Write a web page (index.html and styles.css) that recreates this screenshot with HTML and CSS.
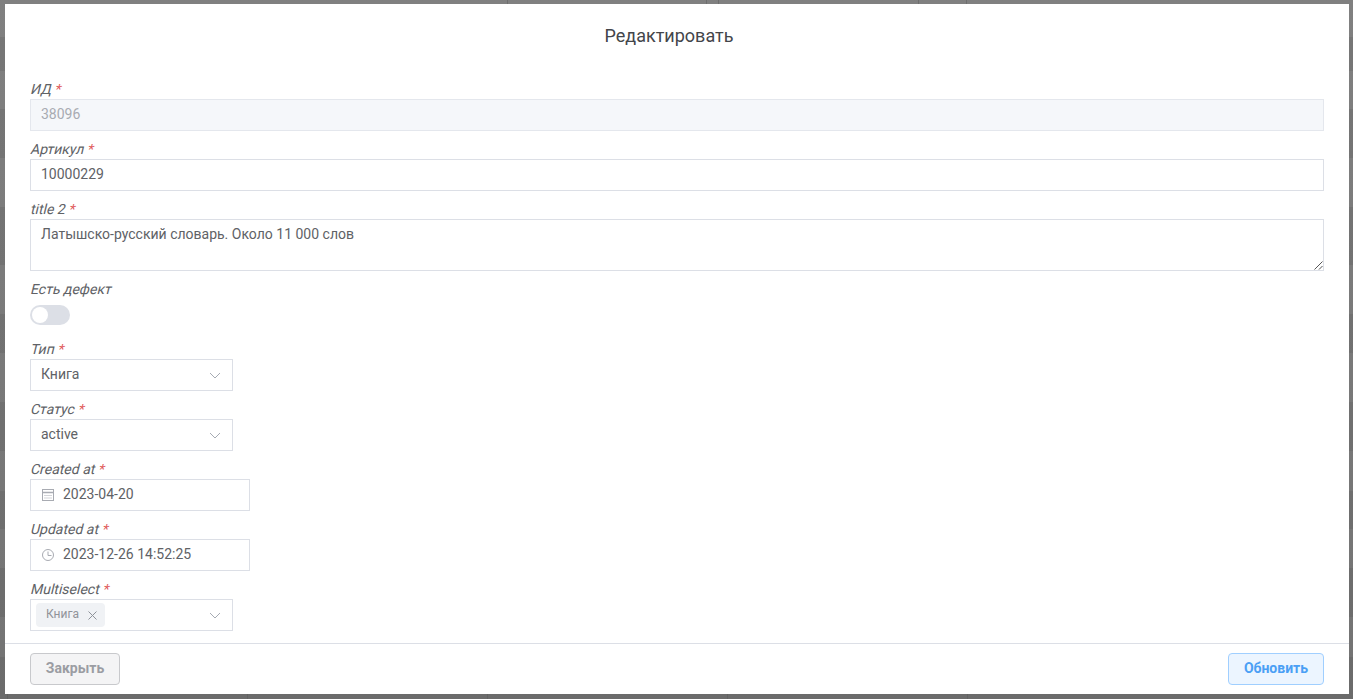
FILE: index.html
```html
<!DOCTYPE html>
<html lang="ru">
<head>
<meta charset="utf-8">
<title>Редактировать</title>
<link rel="stylesheet" href="styles.css">
</head>
<body>
<div class="modal">
  <header class="modal-head">Редактировать</header>
  <form class="modal-body">
    <div class="field">
      <label class="label">ИД <span class="req">*</span></label>
      <div class="control wide disabled"><span class="val">38096</span></div>
    </div>
    <div class="field">
      <label class="label">Артикул <span class="req">*</span></label>
      <div class="control wide"><span class="val">10000229</span></div>
    </div>
    <div class="field">
      <label class="label">title 2 <span class="req">*</span></label>
      <div class="control wide area">Латышско-русский словарь. Около 11 000 слов
        <svg class="grip" width="9" height="9" viewBox="0 0 9 9"><path d="M0.5 8.5L8.5 0.5M5 8.5L8.5 5" stroke="#555" stroke-width="1" fill="none"/></svg>
      </div>
    </div>
    <div class="field">
      <label class="label">Есть дефект</label>
      <div class="switch-row"><span class="switch"><span class="knob"></span></span></div>
    </div>
    <div class="field">
      <label class="label">Тип <span class="req">*</span></label>
      <div class="control select"><span class="val">Книга</span>
        <svg class="chev" width="12" height="7" viewBox="0 0 12 7"><path d="M1 1l5 5 5-5" stroke="#a6abb3" fill="none"/></svg>
      </div>
    </div>
    <div class="field">
      <label class="label">Статус <span class="req">*</span></label>
      <div class="control select"><span class="val">active</span>
        <svg class="chev" width="12" height="7" viewBox="0 0 12 7"><path d="M1 1l5 5 5-5" stroke="#a6abb3" fill="none"/></svg>
      </div>
    </div>
    <div class="field">
      <label class="label">Created at <span class="req">*</span></label>
      <div class="control date">
        <svg width="14" height="14" viewBox="0 0 14 14" fill="none" stroke="#a8abb2"><rect x="1.5" y="1.5" width="11" height="11"/><path d="M1.5 4.5h11" stroke-width="1.5"/><path d="M3.5 7.5h7M3.5 10h7" stroke-dasharray="1 1"/></svg>
        <span class="val">2023-04-20</span>
      </div>
    </div>
    <div class="field">
      <label class="label">Updated at <span class="req">*</span></label>
      <div class="control date">
        <svg width="14" height="14" viewBox="0 0 14 14" fill="none" stroke="#a8abb2"><circle cx="7" cy="7" r="5.5"/><path d="M7 3.5V7.5H10.5"/></svg>
        <span class="val">2023-12-26 14:52:25</span>
      </div>
    </div>
    <div class="field">
      <label class="label">Multiselect <span class="req">*</span></label>
      <div class="control select multi">
        <span class="tag"><span class="val">Книга</span>
          <svg width="9" height="9" viewBox="0 0 9 9"><path d="M.5 .5l8 8M8.5 .5l-8 8" stroke="#8e9299" fill="none"/></svg>
        </span>
        <svg class="chev" width="12" height="7" viewBox="0 0 12 7"><path d="M1 1l5 5 5-5" stroke="#a6abb3" fill="none"/></svg>
      </div>
    </div>
  </form>
  <footer class="modal-foot">
    <button type="button" class="btn btn-close">Закрыть</button>
    <button type="button" class="btn btn-update">Обновить</button>
  </footer>
</div>
</body>
</html>
```
FILE: styles.css
```css
* { box-sizing: border-box; }
html, body { margin: 0; height: 100%; overflow: hidden; }
body {
  background-color: #7f7f7f;
  background-image:
    linear-gradient(to right, transparent 507px, #6e6e6e 507px, #6e6e6e 508px, transparent 508px, transparent 706px, #6e6e6e 706px, #6e6e6e 707px, transparent 707px, transparent 718px, #6e6e6e 718px, #6e6e6e 719px, transparent 719px, transparent 918px, #6e6e6e 918px, #6e6e6e 919px, transparent 919px, transparent 966px, #6e6e6e 966px, #6e6e6e 967px, transparent 967px),
    linear-gradient(to right, transparent 7px, #626262 7px, #626262 8px, transparent 8px, transparent 247px, #626262 247px, #626262 248px, transparent 248px, transparent 487px, #626262 487px, #626262 488px, transparent 488px, transparent 727px, #626262 727px, #626262 728px, transparent 728px, transparent 967px, #626262 967px, #626262 968px, transparent 968px),
    linear-gradient(to bottom, transparent 37px, rgba(0,0,0,.07) 37px, rgba(0,0,0,.07) 71px, transparent 71px, transparent 109px, rgba(0,0,0,.07) 109px, rgba(0,0,0,.07) 158px, transparent 158px, transparent 207px, rgba(0,0,0,.07) 207px, rgba(0,0,0,.07) 265px, transparent 265px, transparent 314px, rgba(0,0,0,.07) 314px, rgba(0,0,0,.07) 353px, transparent 353px, transparent 402px, rgba(0,0,0,.07) 402px, rgba(0,0,0,.07) 451px, transparent 451px, transparent 491px, rgba(0,0,0,.07) 491px, rgba(0,0,0,.07) 529px, transparent 529px, transparent 568px, rgba(0,0,0,.07) 568px, rgba(0,0,0,.07) 617px, transparent 617px, transparent 657px, rgba(0,0,0,.07) 657px),
    linear-gradient(to bottom, #808080, #737373);
  background-repeat: no-repeat;
  background-size: 100% 4px, 100% 5px, 100% 100%, 100% 100%;
  background-position: 0 0, 0 100%, 0 0, 0 0;
  padding: 4px 4px 5px 5px;
  font-family: Roboto, "Noto Sans", sans-serif;
  font-size: 14px;
  color: #606266;
}
.modal {
  height: 690px;
  background: #fff;
  display: flex;
  flex-direction: column;
}
.modal-head {
  height: 62px;
  padding: 22px 16px 0 0;
  text-align: center;
  font-size: 18px;
  line-height: 20px;
  color: #43454a;
}
.modal-body {
  flex: 1;
  padding: 13px 25px 0;
  overflow: hidden;
}
.field { margin-bottom: 8px; }
.label {
  display: block;
  height: 20px;
  line-height: 20px;
  color: #606266;
  transform: skewX(-14deg);
  transform-origin: 0 15px;
}
.req { color: #e05a5a; }
.control {
  height: 32px;
  border: 1px solid #dcdfe6;
  padding: 0 10px;
  line-height: 28px;
  background: #fff;
  display: flex;
  align-items: center;
}
.val { padding-bottom: 2px; }
.wide { width: 100%; }
.disabled { background: #f5f7fa; border-color: #e4e7ed; color: #a8abb2; }
.area {
  height: 52px;
  position: relative;
  align-items: flex-start;
}
.grip { position: absolute; right: 0; bottom: 0; }
.switch-row { height: 32px; padding-top: 6px; }
.switch {
  display: block;
  width: 40px;
  height: 20px;
  border-radius: 10px;
  background: #dcdfe6;
  padding: 2px;
}
.knob { display: block; width: 16px; height: 16px; border-radius: 50%; background: #fff; }
.select { width: 203px; justify-content: space-between; padding-right: 11px; }
.date { width: 220px; gap: 8px; padding-left: 10px; }
.date svg { flex: none; }
.multi { padding-left: 5px; }
.tag {
  height: 24px;
  width: 69px;
  padding: 0 8px 0 10px;
  border-radius: 4px;
  background: #f0f2f5;
  color: #909399;
  font-size: 12px;
  display: flex;
  align-items: center;
  justify-content: space-between;
}
.modal-foot {
  height: 51px;
  border-top: 1px solid #dcdfe6;
  padding: 9px 25px 0;
  display: flex;
  justify-content: space-between;
  align-items: flex-start;
}
.btn {
  height: 32px;
  border-radius: 4px;
  border: 1px solid;
  font: 700 14px Roboto, sans-serif;
  padding: 0 0 2px;
}
.btn-close { width: 90px; background: #f4f4f5; border-color: #c8c9cc; color: #9b9da3; }
.btn-update { width: 96px; background: #ecf5ff; border-color: #a0cfff; color: #4a9ff5; }
```
